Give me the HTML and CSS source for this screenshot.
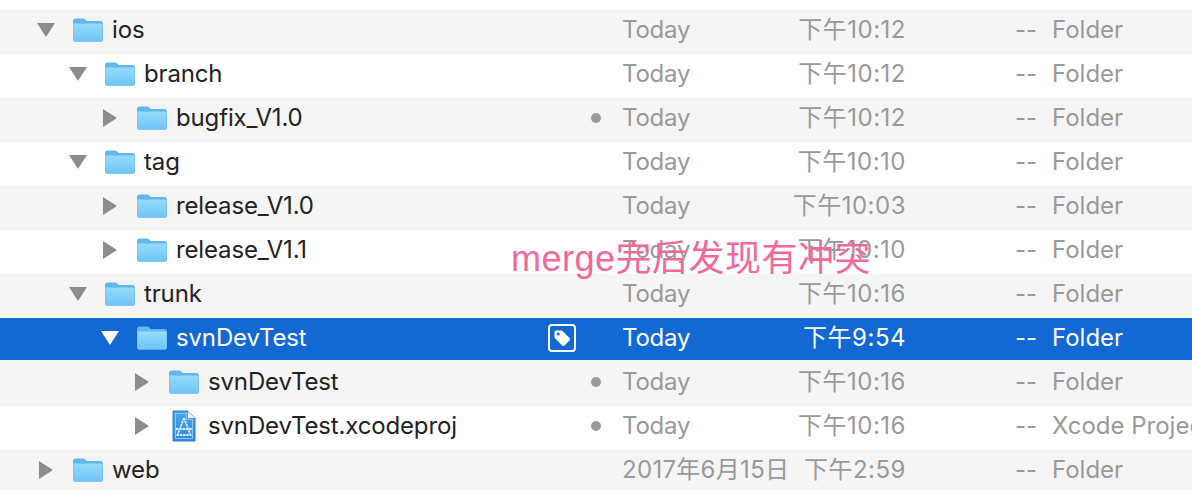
FILE: index.html
```html
<!DOCTYPE html>
<html lang="zh">
<head>
<meta charset="utf-8">
<title>svnDevTest</title>
<link rel="stylesheet" href="styles.css">
</head>
<body>
<svg class="defs" width="0" height="0" aria-hidden="true">
  <defs>
    <linearGradient id="fg" x1="0" y1="0" x2="0" y2="1"><stop offset="0" stop-color="#95dbfc"/><stop offset="1" stop-color="#70c5f4"/></linearGradient>
    <linearGradient id="doc" x1="0" y1="0" x2="0" y2="1"><stop offset="0" stop-color="#4aa6ee"/><stop offset="1" stop-color="#2f88dc"/></linearGradient>
    <symbol id="folder" viewBox="0 0 32 26">
      <path d="M1 4.200C1 2.400 2 1.500 3.600 1.500h7.200c1.200 0 1.900.4 2.700 1.300l1.200 1.300h13.800c1.600 0 2.500.9 2.500 2.500V22.500c0 1.400-.8 2.200-2.200 2.200H3.200c-1.400 0-2.200-.8-2.200-2.200Z" fill="#62b8ec"/>
      <path d="M1.400 6.600h29.200V22.400c0 1.200-.6 1.800-1.800 1.800H3.200c-1.200 0-1.800-.6-1.800-1.800Z" fill="url(#fg)"/>
    </symbol>
    <symbol id="tri-down" viewBox="0 0 18 16"><path d="M0 1h18L9 15Z"/></symbol>
    <symbol id="tri-right" viewBox="0 0 16 18"><path d="M1 0v18L15 9Z"/></symbol>
  </defs>
</svg>
<main class="list">
  <div class="row alt level-0">
    <svg class="tri down"><use href="#tri-down"/></svg><svg class="icon"><use href="#folder"/></svg>
    <span class="name">ios</span><span class="mark"></span><span class="date">Today</span><span class="time">下午10:12</span><span class="size">--</span><span class="kind">Folder</span>
  </div>
  <div class="row level-1">
    <svg class="tri down"><use href="#tri-down"/></svg><svg class="icon"><use href="#folder"/></svg>
    <span class="name">branch</span><span class="mark"></span><span class="date">Today</span><span class="time">下午10:12</span><span class="size">--</span><span class="kind">Folder</span>
  </div>
  <div class="row alt level-2">
    <svg class="tri right"><use href="#tri-right"/></svg><svg class="icon"><use href="#folder"/></svg>
    <span class="name">bugfix_V1.0</span><span class="mark"><i class="dot"></i></span><span class="date">Today</span><span class="time">下午10:12</span><span class="size">--</span><span class="kind">Folder</span>
  </div>
  <div class="row level-1">
    <svg class="tri down"><use href="#tri-down"/></svg><svg class="icon"><use href="#folder"/></svg>
    <span class="name">tag</span><span class="mark"></span><span class="date">Today</span><span class="time">下午10:10</span><span class="size">--</span><span class="kind">Folder</span>
  </div>
  <div class="row alt level-2">
    <svg class="tri right"><use href="#tri-right"/></svg><svg class="icon"><use href="#folder"/></svg>
    <span class="name">release_V1.0</span><span class="mark"></span><span class="date">Today</span><span class="time">下午10:03</span><span class="size">--</span><span class="kind">Folder</span>
  </div>
  <div class="row level-2">
    <svg class="tri right"><use href="#tri-right"/></svg><svg class="icon"><use href="#folder"/></svg>
    <span class="name">release_V1.1</span><span class="mark"></span><span class="date">Today</span><span class="time">下午10:10</span><span class="size">--</span><span class="kind">Folder</span>
  </div>
  <div class="row alt level-1">
    <svg class="tri down"><use href="#tri-down"/></svg><svg class="icon"><use href="#folder"/></svg>
    <span class="name">trunk</span><span class="mark"></span><span class="date">Today</span><span class="time">下午10:16</span><span class="size">--</span><span class="kind">Folder</span>
  </div>
  <div class="row selected level-2">
    <svg class="tri down"><use href="#tri-down"/></svg><svg class="icon"><use href="#folder"/></svg>
    <span class="name">svnDevTest</span>
    <span class="mark"><svg class="tag" viewBox="0 0 28 28"><rect x="1" y="1" width="26" height="26" rx="3" fill="none" stroke="#fff" stroke-width="2"/><path d="M6.500 8.200c0-1 .7-1.700 1.700-1.700h5c.6 0 1 .2 1.400.6l6.900 6.900c.7.700.7 1.700 0 2.400l-5 5c-.7.700-1.700.7-2.400 0l-6.900-6.900c-.4-.4-.7-.8-.7-1.400Zm3.800.3a1.500 1.500 0 1 0 0 3 1.500 1.500 0 0 0 0-3Z" fill="#fff" fill-rule="evenodd"/></svg></span>
    <span class="date">Today</span><span class="time">下午9:54</span><span class="size">--</span><span class="kind">Folder</span>
  </div>
  <div class="row alt level-3">
    <svg class="tri right"><use href="#tri-right"/></svg><svg class="icon"><use href="#folder"/></svg>
    <span class="name">svnDevTest</span><span class="mark"><i class="dot"></i></span><span class="date">Today</span><span class="time">下午10:16</span><span class="size">--</span><span class="kind">Folder</span>
  </div>
  <div class="row level-3">
    <svg class="tri right"><use href="#tri-right"/></svg>
    <svg class="icon doc" viewBox="0 0 32 32"><path d="M5 1h15l7 7v23H5Z" fill="url(#doc)" stroke="#2c7ccb"/><path d="M20 1v7h7Z" fill="#e3f2fd"/><path d="M7.500 3.500h11v6h6v19h-17Z" fill="none" stroke="#8fc8f4"/><path d="M16 8 9.500 25M16 8l6.500 17M8 19h16M8.500 25h15" fill="none" stroke="#dceefc" stroke-width="1.800" stroke-dasharray="2.500 .8"/></svg>
    <span class="name">svnDevTest.xcodeproj</span><span class="mark"><i class="dot"></i></span><span class="date">Today</span><span class="time">下午10:16</span><span class="size">--</span><span class="kind">Xcode Project</span>
  </div>
  <div class="row alt level-0">
    <svg class="tri right"><use href="#tri-right"/></svg><svg class="icon"><use href="#folder"/></svg>
    <span class="name">web</span><span class="mark"></span><span class="date wide">2017年6月15日</span><span class="time">下午2:59</span><span class="size">--</span><span class="kind">Folder</span>
  </div>
  <p class="note">merge完后发现有冲突</p>
</main>
</body>
</html>
```
FILE: styles.css
```css
html, body { margin: 0; padding: 0; background: #fff; }
body { width: 1192px; height: 490px; overflow: hidden; font-family: Inter, "Noto Sans CJK SC", sans-serif; font-size: 24px; line-height: 44px; color: #222; }
.defs { display: block; height: 0; }
.list { position: relative; padding-top: 10px; }
.row { box-sizing: border-box; display: flex; align-items: center; height: 44px; padding-bottom: 4px; white-space: nowrap; }
.row.alt { background: #f5f5f5; }
.row.selected { height: 42px; margin-bottom: 2px; padding-bottom: 2px; background: #1269d3; color: #fff; }
.row.selected + .row { margin-top: -2px; height: 46px; padding-bottom: 2px; }
.tri { flex: none; width: 18px; height: 18px; margin-left: -1px; margin-right: 17px; fill: #8c8c8c; }
.tri.right { width: 16px; margin-right: 18px; margin-left: 0; }
.selected .tri { fill: #fff; }
.icon { flex: none; width: 32px; height: 28px; margin-right: 8px; }
.icon.doc { height: 32px; }
.level-0 { padding-left: 38px; }
.level-1 { padding-left: 70px; }
.level-2 { padding-left: 102px; }
.level-3 { padding-left: 134px; }
.name { flex: 1 1 0; min-width: 0; letter-spacing: -.15px; }
.mark { flex: none; width: 60px; margin-right: 20px; display: flex; justify-content: flex-end; align-items: center; }
.dot { display: block; width: 10px; height: 10px; margin-right: 1px; border-radius: 50%; background: #9a9a9a; }
.tag { width: 28px; height: 28px; margin-right: 26px; }
.date { flex: none; width: 100px; letter-spacing: -.2px; color: #999; }
.date.wide { letter-spacing: .3px; }
.time { flex: none; width: 184px; text-align: right; letter-spacing: .5px; color: #999; }
.size { flex: none; width: 37px; margin-left: 109px; color: #999; }
.kind { flex: none; width: 140px; color: #999; }
.selected .date, .selected .time, .selected .size, .selected .kind { color: #fff; }
.note { position: absolute; left: 511px; top: 237px; margin: 0; font-family: "Liberation Sans", "Noto Sans CJK SC", sans-serif; font-size: 36px; line-height: 44px; letter-spacing: .5px; color: #f2689a; white-space: nowrap; }
```
